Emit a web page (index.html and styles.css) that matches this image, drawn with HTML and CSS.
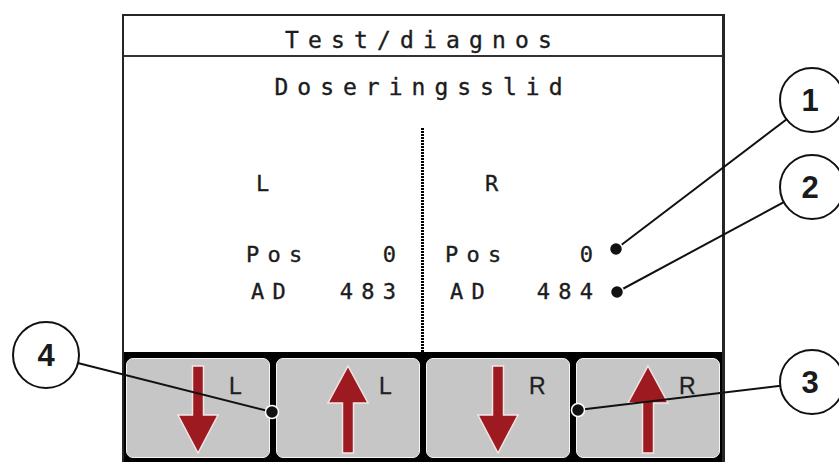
FILE: index.html
```html
<!DOCTYPE html>
<html lang="sv">
<head>
  <meta charset="UTF-8" />
  <title>Test/diagnos</title>
  <link rel="stylesheet" href="styles.css">
</head>
<body>
  <div class="screen">
    <div class="title">Test/diagnos</div>
    <div class="subtitle">Doseringsslid</div>

    <div class="data">
      <div class="side side-left">
        <div class="block">
          <div class="side-name">L</div>
          <div class="row row-pos"><span>Pos</span><span class="val">0</span></div>
          <div class="row row-ad"><span>AD</span><span class="val">483</span></div>
        </div>
      </div>
      <div class="divider"></div>
      <div class="side side-right">
        <div class="block">
          <div class="side-name">R</div>
          <div class="row row-pos"><span>Pos</span><span class="val">0</span></div>
          <div class="row row-ad"><span>AD</span><span class="val">484</span></div>
        </div>
      </div>
    </div>

    <div class="keys">
      <div class="key">
        <svg class="arrow" width="44" height="90" viewBox="0 0 44 90"><path d="M16.5 1H27.5V50H42L22 88L2 50H16.5Z"/></svg>
        <span class="key-label">L</span>
      </div>
      <div class="key">
        <svg class="arrow" width="44" height="90" viewBox="0 0 44 90"><path d="M22 1L42 38H27.5V88H16.5V38H2Z"/></svg>
        <span class="key-label">L</span>
      </div>
      <div class="key">
        <svg class="arrow" width="44" height="90" viewBox="0 0 44 90"><path d="M16.5 1H27.5V50H42L22 88L2 50H16.5Z"/></svg>
        <span class="key-label">R</span>
      </div>
      <div class="key">
        <svg class="arrow" width="44" height="90" viewBox="0 0 44 90"><path d="M22 1L42 38H27.5V88H16.5V38H2Z"/></svg>
        <span class="key-label">R</span>
      </div>
    </div>
  </div>

  <!-- callouts -->
  <svg class="callouts" width="839" height="462" viewBox="0 0 839 462">
    <g class="leader">
      <line x1="616" y1="249" x2="812" y2="100"/>
      <line x1="617" y1="292" x2="812" y2="187"/>
      <line x1="578" y1="410" x2="812" y2="382"/>
      <line x1="272" y1="412" x2="46" y2="355"/>
    </g>
    <g class="dot">
      <circle cx="616" cy="249" r="6.5"/>
      <circle cx="617" cy="292" r="6.5"/>
      <circle cx="578" cy="410" r="6.5"/>
      <circle cx="272" cy="412" r="6.5"/>
    </g>
    <g class="bubble">
      <circle cx="812" cy="100" r="32"/>
      <circle cx="812" cy="187" r="32"/>
      <circle cx="812" cy="382" r="32"/>
      <circle cx="46" cy="355" r="33"/>
    </g>
    <g class="num">
      <text x="810" y="111">1</text>
      <text x="810" y="198">2</text>
      <text x="810" y="393">3</text>
      <text x="46" y="366">4</text>
    </g>
  </svg>
</body>
</html>
```

FILE: styles.css
```css
body {
  margin: 0;
  width: 839px;
  height: 462px;
  overflow: hidden;
  position: relative;
  background-color: #ffffff;
  font-family: "DejaVu Sans Mono", "Liberation Mono", monospace;
  color: #1c1c1c;
}

.screen {
  box-sizing: border-box;
  width: 603px;
  height: 460px;
  margin: 14px 0 0 122px;
  border: 2px solid #262626;
  border-right-width: 3px;
  border-bottom: none;
  display: flex;
  flex-direction: column;
  -webkit-text-stroke: 0.35px #1c1c1c;
}

.title {
  box-sizing: border-box;
  height: 41px;
  padding-top: 11px;
  font-size: 23px;
  line-height: 27px;
  letter-spacing: 9.15px;
  text-align: center;
  border-bottom: 2px solid #333;
}

.subtitle {
  box-sizing: border-box;
  height: 71px;
  padding-top: 17px;
  font-size: 23px;
  line-height: 27px;
  letter-spacing: 9px;
  text-align: center;
}

.data {
  height: 224px;
  display: grid;
  grid-template-columns: 297px 3px 1fr;
}

.divider {
  background: repeating-linear-gradient(to bottom, #000 0 2px, transparent 2px 3px);
}

.side {
  display: flex;
}

.side-left {
  justify-content: flex-end;
  padding-right: 25px;
}

.side-right {
  padding-left: 21px;
}

.block {
  width: 150px;
  padding-top: 43px;
  font-size: 22px;
  line-height: 26px;
  letter-spacing: 8.3px;
}

.side-right .block {
  width: 148px;
}

.side-name {
  padding-left: 10px;
}

.side-right .side-name {
  padding-left: 40px;
}

.row {
  display: flex;
  justify-content: space-between;
}

.row-pos {
  margin-top: 45px;
}

.row-ad {
  margin-top: 11px;
  padding-left: 5px;
}

.val {
  margin-right: -8.3px;
}

.keys {
  box-sizing: border-box;
  height: 110px;
  background-color: #000;
  padding: 6px 2px 4px 2px;
  display: grid;
  grid-template-columns: repeat(4, 1fr);
  gap: 6px;
  -webkit-text-stroke: 0;
}

.key {
  box-sizing: border-box;
  height: 100px;
  background-color: #c6c6c6;
  border: 1px solid #f4f4f4;
  border-radius: 7px;
  padding-top: 6px;
  display: grid;
  grid-template-columns: 1fr auto 1fr;
  align-items: start;
}

.arrow {
  grid-column: 2;
  display: block;
}

.arrow path {
  fill: #9d1b20;
  stroke: #f2e6e6;
  stroke-width: 1.5;
  stroke-linejoin: miter;
}

.key-label {
  grid-column: 3;
  margin-top: 10px;
  padding-left: 9px;
  font-family: "Liberation Sans", Arial, sans-serif;
  font-size: 23px;
  line-height: 23px;
  color: #1e1e1e;
  -webkit-text-stroke: 0.3px #1e1e1e;
}

.callouts {
  position: absolute;
  left: 0;
  top: 0;
  pointer-events: none;
}

.leader line {
  stroke: #111;
  stroke-width: 2;
}

.dot circle {
  fill: #111;
  stroke: #fff;
  stroke-width: 1.5;
}

.bubble circle {
  fill: #fff;
  stroke: #111;
  stroke-width: 2;
}

.num text {
  font-family: "Liberation Sans", Arial, sans-serif;
  font-weight: bold;
  font-size: 31px;
  text-anchor: middle;
  fill: #1a1a1a;
}
```
